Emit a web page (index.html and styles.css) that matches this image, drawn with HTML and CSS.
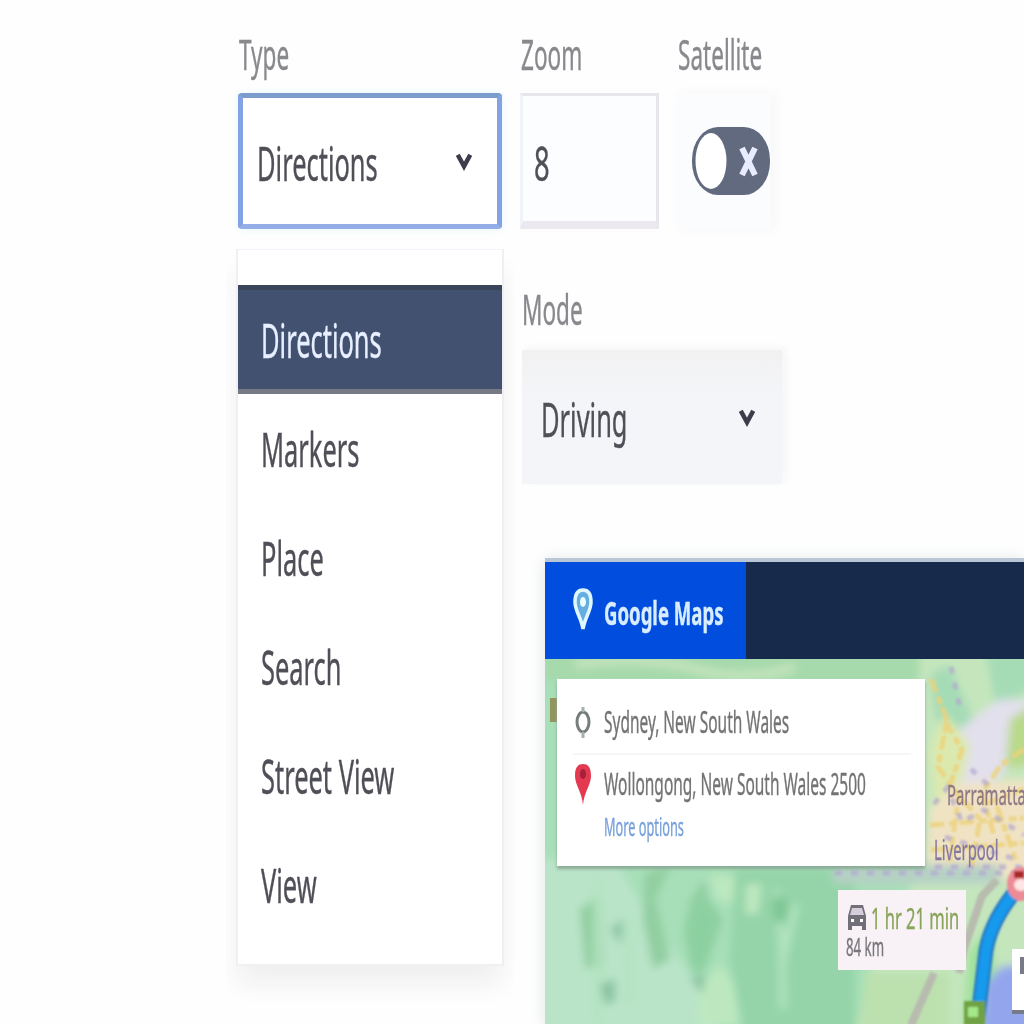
FILE: index.html
```html
<!DOCTYPE html>
<html lang="en">
<head>
<meta charset="utf-8">
<title>Map settings</title>
<link rel="stylesheet" href="styles.css">
</head>
<body>
<main class="editor">
  <section class="type-column">
    <div class="label"><span class="narrow">Type</span></div>
    <div class="select select-focused">
      <span class="narrow">Directions</span>
      <svg class="chevron" viewBox="0 0 18 20"><path d="M2 3 L9 16 L16 3"/></svg>
    </div>
    <ul class="menu">
      <li class="option option-active"><span class="narrow">Directions</span></li>
      <li class="option"><span class="narrow">Markers</span></li>
      <li class="option"><span class="narrow">Place</span></li>
      <li class="option"><span class="narrow">Search</span></li>
      <li class="option"><span class="narrow">Street View</span></li>
      <li class="option"><span class="narrow">View</span></li>
    </ul>
  </section>
  <section class="side-column">
    <div class="row">
      <div class="zoom-field">
        <div class="label"><span class="narrow">Zoom</span></div>
        <div class="input"><span class="narrow digit">8</span></div>
      </div>
      <div class="satellite-field">
        <div class="label"><span class="narrow">Satellite</span></div>
        <div class="toggle-box">
          <svg class="toggle" viewBox="0 0 78 68">
            <rect width="78" height="68" rx="26" ry="33" fill="#626a80"/>
            <ellipse cx="19" cy="34" rx="15.500" ry="28" fill="#fff"/>
            <path d="M50 21 L63 48 M63 21 L50 48" stroke="#e9ebff" stroke-width="6"/>
          </svg>
        </div>
      </div>
    </div>
    <div class="mode-field">
      <div class="label"><span class="narrow">Mode</span></div>
      <div class="select select-plain">
        <span class="narrow">Driving</span>
        <svg class="chevron" viewBox="0 0 18 20"><path d="M2 3 L9 16 L16 3"/></svg>
      </div>
    </div>
    <div class="map-card">
      <header class="map-header">
        <div class="tab">
          <svg class="tab-pin" viewBox="0 0 20 44"><path d="M10 41 C8 29 2 23 2 14 C2 6 5 2 10 2 C15 2 18 6 18 14 C18 23 12 29 10 41Z" fill="#66aee0" stroke="#e0f7ff" stroke-width="3.500"/><ellipse cx="10" cy="14" rx="3" ry="5" fill="#eaffff"/></svg>
          <span class="narrow tab-title">Google Maps</span>
        </div>
      </header>
      <div class="map">
        <svg class="terrain" viewBox="0 0 479 366" preserveAspectRatio="none">
          <defs><filter id="soft"><feGaussianBlur stdDeviation="4"/></filter><filter id="slight"><feGaussianBlur stdDeviation="1.200"/></filter></defs>
          <rect width="479" height="366" fill="#a7dfb8"/>
          <g filter="url(#soft)">
            <path d="M-10 200 H70 L105 260 L160 335 L175 380 H-10Z" fill="#b9e4c8"/>
            <path d="M0 -10 H390 V22 H0Z" fill="#a6d9ab"/>
            <path d="M30 5 Q100 -4 150 10 T250 8" fill="none" stroke="#c5e4bd" stroke-width="9"/>
            <path d="M190 210 H310 V380 H200 L185 300Z" fill="#94d4a8"/>
            <path d="M140 280 Q138 245 160 235 L178 260 L160 310 L148 315Z" fill="#8dd0a0"/>
            <path d="M100 215 L126 205 L110 240 L125 300 L108 310 L98 260Z M140 250 L158 222 L164 232Z M35 250 L56 235 L58 310 L40 308Z" fill="#91cea0"/>
            <path d="M154 366 L153 330 L175 305 L188 325 L194 366Z M201 225 L217 225 L213 255 L200 255Z M165 215 L190 218 L188 245 L171 240Z" fill="#bde8bf"/>
            <path d="M52 220 V366 M84 260 V345 M232 230 L237 290 L238 350 M251 245 L238 300" fill="none" stroke="#b2e4bf" stroke-width="7"/>
            <ellipse cx="235" cy="250" rx="8" ry="14" fill="#80c794"/>
            <path d="M65 270 L78 260 L76 286Z M55 325 L70 320 V342 L60 346Z M145 320 L160 315 L158 335Z" fill="#89c3a1"/>
            <path d="M375 -10 H490 V380 H310 L325 310 L370 220Z" fill="#c5e6bd"/>
            <path d="M385 15 L405 5 L430 65 L420 95 L390 60Z M440 -10 H490 V30 L450 45Z" fill="#a5dcb6"/>
            <path d="M400 82 L430 58 L455 40 L490 42 V90 L445 125 L415 135Z" fill="#e2e0ec"/>
            <path d="M385 90 L400 55 L425 85 L418 120 L390 145Z" fill="#dce9ae"/>
            <path d="M385 150 L410 125 L490 120 V220 H382Z" fill="#f0e3c4"/>
            <path d="M465 60 L490 45 V105 L460 110Z" fill="#b9d98b"/>
            <path d="M288 205 H455 V225 H288Z" fill="#b6d0c5"/>
            <path d="M320 314 H405 V380 H315Z" fill="#bce1af"/>
            <path d="M424 292 L446 265 L455 366 H418Z" fill="#9ee19c"/>
            <path d="M440 325 L457 307 L490 306 V380 H435Z" fill="#93a6ed"/>
          </g>
          <g fill="none" stroke="#ecd27c" stroke-width="5" stroke-dasharray="14 5 8 3" opacity=".8" filter="url(#slight)">
            <path d="M386 20 L402 61 L393 108 L414 137 L404 205 M400 62 L417 91 L405 126 L435 160 L426 212 M452 147 L471 202 M479 90 L455 107 L437 134 L450 180 M385 166 L479 159 M386 191 L479 184 M440 145 L479 130"/>
          </g>
          <g fill="none" stroke="#b3a9cf" stroke-width="5" stroke-dasharray="7 9" opacity=".7" filter="url(#slight)">
            <path d="M389 145 L402 129 L417 163 L439 151 L479 176 M390 208 H479 M406 8 L415 49 M426 110 L445 128 M290 214 H470 M400 178 L470 200"/>
          </g>
          <g filter="url(#slight)">
            <path d="M452 221 L437 237 L419 290 L414 314 M389 314 L366 366" fill="none" stroke="#b8bcaf" stroke-width="8"/>
            <path d="M474 228 Q447 259 441 291 L432 366" fill="none" stroke="#2879c3" stroke-width="15"/>
            <path d="M474 228 Q447 259 441 291 L432 366" fill="none" stroke="#189aee" stroke-width="10"/>
            <ellipse cx="476" cy="225" rx="14" ry="17" fill="#ed8b96"/>
            <path d="M469 212 H479 V219 H469Z" fill="#a72c2c"/>
            <ellipse cx="476" cy="226" rx="7" ry="6" fill="#ffe5e5"/>
            <rect x="419" y="342" width="21" height="24" fill="#6fa143"/>
            <rect x="423" y="348" width="10" height="10" fill="#a4e889"/>
          </g>
          <rect x="467" y="290" width="12" height="63" fill="#fff"/>
          <path d="M477 298 v17 M467 353 H479" fill="none" stroke="#777b88" stroke-width="4"/>
          <rect x="5" y="39" width="8" height="24" fill="#94945f"/>
        </svg>
        <span class="narrow place parramatta">Parramatta</span>
        <span class="narrow place liverpool">Liverpool</span>
        <div class="route-card">
          <div class="stop">
            <svg class="stop-icon" viewBox="0 0 20 44"><ellipse cx="10" cy="22" rx="6" ry="10" fill="#fff" stroke="#777d7b" stroke-width="3"/><path d="M10 7 V12 M10 32 V38" stroke="#a6b1a7" stroke-width="3"/></svg>
            <span class="narrow stop-name">Sydney, New South Wales</span>
          </div>
          <div class="stop stop-end">
            <svg class="stop-icon" viewBox="0 0 20 44"><path d="M10 43 C9 30 2 23 2 14 C2 5 5 2 10 2 C15 2 18 5 18 14 C18 23 11 30 10 43Z" fill="#e43a51"/><ellipse cx="10" cy="12" rx="3" ry="5" fill="#a62039"/></svg>
            <span class="narrow stop-name">Wollongong, New South Wales 2500</span>
          </div>
          <div class="more"><span class="narrow">More options</span></div>
        </div>
        <div class="trip">
          <div class="trip-top">
            <svg class="car" viewBox="0 0 22 30"><path d="M2 28 V14 L5 3 H17 L20 14 V28 H16 V24 H6 V28Z" fill="#716f78"/><path d="M6 6 H16 L18 13 H4Z" fill="#d4cedb"/><path d="M5 17 h3 v3 h-3z M14 17 h3 v3 h-3z" fill="#fff"/></svg>
            <span class="narrow duration">1 hr 21 min</span>
          </div>
          <div class="distance"><span class="narrow">84 km</span></div>
        </div>
      </div>
    </div>
  </section>
</main>
</body>
</html>
```
FILE: styles.css
```css
* { box-sizing: border-box; }
body {
  margin: 0;
  width: 1024px;
  height: 1024px;
  overflow: hidden;
  background: #fefefe;
  color: #4f4f57;
  font: 48px/1 "Noto Sans", "Open Sans", sans-serif;
}
.editor {
  display: grid;
  grid-template-columns: 264px 504px;
  column-gap: 18px;
  padding: 30px 0 0 238px;
}
.side-column { min-width: 0; }
.narrow {
  display: inline-block;
  white-space: nowrap;
  transform: scaleX(.53);
  transform-origin: left center;
  -webkit-text-stroke: .4px currentColor;
}
.label {
  height: 63px;
  font-size: 41px;
  line-height: 48px;
  color: #88898d;
  padding-left: 1px;
}
.label .narrow { transform: scaleX(.55); }
.select {
  display: flex;
  align-items: center;
  justify-content: space-between;
  height: 136px;
  padding: 3px 27px 0 14px;
}
.select .narrow { width: 0; }
.select-focused {
  padding-right: 25px;
  border: 5px solid #83a3e4;
  border-top-color: #7c9ccb;
  border-bottom-color: #94afe7;
  border-radius: 4px;
  background: #fff;
  box-shadow: 0 0 8px #e5f7ff;
}
.chevron {
  width: 16px;
  height: 20px;
  flex: none;
  margin-top: -4px;
  fill: none;
  stroke: #3e3b4b;
  stroke-width: 5px;
}
.menu {
  list-style: none;
  margin: 20px 0 0;
  padding: 35px 0 25px;
  background: #fff;
  border-top: 1px solid #f0f4fa;
  box-shadow: 0 0 0 2px #f0f0f3, 0 20px 24px #efefef;
  clip-path: inset(0 -12px -60px -12px);
}
.option {
  height: 109px;
  padding-left: 23px;
  display: flex;
  align-items: center;
}
.option-active {
  color: #e8efff;
  background: #425170;
  border-top: 5px solid #3a455c;
  border-bottom: 5px solid #767a84;
}
.row { display: flex; gap: 18px; }
.zoom-field { width: 139px; }
.input {
  height: 136px;
  padding: 5px 0 0 11px;
  display: flex;
  align-items: center;
  background: #fbfdff;
  border: 3px solid #e7e7eb;
  border-bottom-width: 8px;
  border-bottom-color: #ebe9ef;
  border-left-color: #eef4fa;
}
.digit { transform: scaleX(.57); margin-top: 3px; }
.satellite-field { width: 106px; }
.toggle-box {
  height: 136px;
  width: 94px;
  padding: 34px 0 0 15px;
  background: #fbfcfd;
  box-shadow: 4px 0 12px #f6f6f6;
}
.toggle { display: block; width: 78px; height: 68px; }
.mode-field { padding: 56px 0 0 2px; }
.mode-field .label { height: 65px; padding-left: 0; }
.select-plain {
  width: 260px;
  height: 134px;
  padding: 3px 27px 0 19px;
  background: linear-gradient(#f1f1f2, #f4f5f8 35%);
  box-shadow: 4px -2px 8px #f5f5f5;
}
.map-card {
  margin: 78px 0 0 25px;
  box-shadow: 0 -2px 16px #dfe5e2;
}
.map-header {
  height: 97px;
  background: #172a4c;
  box-shadow: 0 -4px 0 #b8c6d6;
}
.tab {
  width: 201px;
  height: 97px;
  padding: 4px 0 0 28px;
  display: flex;
  align-items: center;
  gap: 11px;
  background: #004dde;
  color: #d8edff;
}
.tab-pin { width: 20px; height: 44px; flex: none; margin-top: -6px; }
.tab-title { font-size: 32px; font-weight: 700; transform: scaleX(.58); }
.map { position: relative; height: 370px; overflow: hidden; }
.terrain { display: block; width: 479px; height: 366px; }
.route-card {
  position: absolute;
  left: 12px;
  top: 20px;
  width: 368px;
  height: 187px;
  padding: 2px 0 0 16px;
  background: #fff;
  box-shadow: 0 3px 3px #8baa96;
}
.stop {
  display: flex;
  align-items: center;
  gap: 11px;
  height: 74px;
  margin-right: 14px;
  padding-top: 10px;
  border-bottom: 2px solid #f6f6f6;
}
.stop-end { height: 56px; padding-top: 2px; border: 0; }
.stop-icon { width: 20px; height: 44px; flex: none; }
.stop-name { font-size: 30px; color: #737373; transform: scaleX(.516); }
.more { padding-left: 31px; font-size: 25px; line-height: 30px; color: #78a0db; }
.more .narrow { transform: scaleX(.51); }
.place { position: absolute; font-size: 28px; color: #8e7884; }
.parramatta { left: 402px; top: 121px; }
.liverpool { left: 389px; top: 176px; color: #8579a3; }
.trip {
  position: absolute;
  left: 293px;
  top: 231px;
  width: 128px;
  height: 80px;
  padding: 11px 8px;
  background: #f8f2f6;
}
.trip-top { display: flex; gap: 3px; height: 32px; align-items: center; }
.car { width: 22px; height: 30px; flex: none; }
.duration { font-size: 29px; color: #88a458; transform: scaleX(.57); }
.distance { font-size: 25px; color: #77777b; line-height: 27px; }
```
